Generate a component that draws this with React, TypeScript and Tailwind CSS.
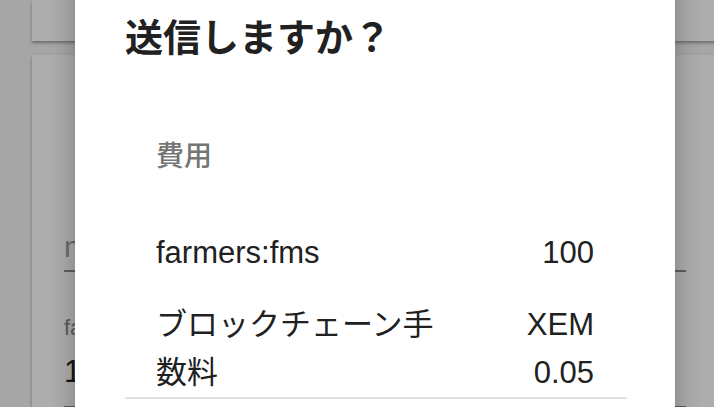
import React from 'react';

const font = { fontFamily: '"Liberation Sans", "Noto Sans CJK JP", sans-serif' };

function PageBehind() {
  return (
    <div className="flex flex-col gap-[14px] pl-[32px] w-[718px] -mr-[4px]">
      {/* upper card, scrolled mostly out of view */}
      <div className="h-[41px] bg-white shadow-[0_2px_3px_rgba(0,0,0,0.35)]" />
      {/* form card */}
      <div className="h-[400px] bg-white shadow-[0_2px_3px_rgba(0,0,0,0.35)] px-[32px] pt-[170px]">
        <div className="h-[47px] border-b-2 border-[#8c8c8c] text-[30px] leading-[44px] text-[#9e9e9e]">
          namespace
        </div>
        <div className="mt-[42px] text-[22px] leading-[28px] text-[#8a8a8a]">farmers:fms</div>
        <div className="h-[66px] pt-[8px] border-b-2 border-[#8c8c8c] text-[31px] leading-[44px] text-[#212121]">
          100
        </div>
      </div>
    </div>
  );
}

export default function App() {
  return (
    <div className="relative w-[714px] h-[407px] overflow-hidden bg-[#f5f5f5]" style={font}>
      <PageBehind />

      {/* backdrop */}
      <div className="absolute inset-0 bg-black/[0.32]" />

      {/* dialog */}
      <div className="absolute left-[75px] top-[-40px] w-[600px] h-[500px] bg-white shadow-[0_0_24px_rgba(0,0,0,0.3)] px-[50px] pt-[54px]">
        <h2 className="text-[38px] leading-[48px] font-bold text-[#212121]">送信しますか？</h2>

        <div className="mt-[75px] pl-[31px] text-[28px] leading-[40px] font-medium text-[#757575]">費用</div>

        <div className="mt-[52px] w-[502px] text-[31px] leading-[48px] text-[#212121]">
          <div className="flex justify-between pl-[31px] pr-[33px]">
            <span>farmers:fms</span>
            <span>100</span>
          </div>
          <div className="mt-[24px] flex justify-between pl-[31px] pr-[33px] border-b-2 border-[#e0e0e0]">
            <span className="max-w-[290px]">ブロックチェーン手数料</span>
            <span className="text-right">
              XEM
              <br />
              0.05
            </span>
          </div>
        </div>
      </div>
    </div>
  );
}
